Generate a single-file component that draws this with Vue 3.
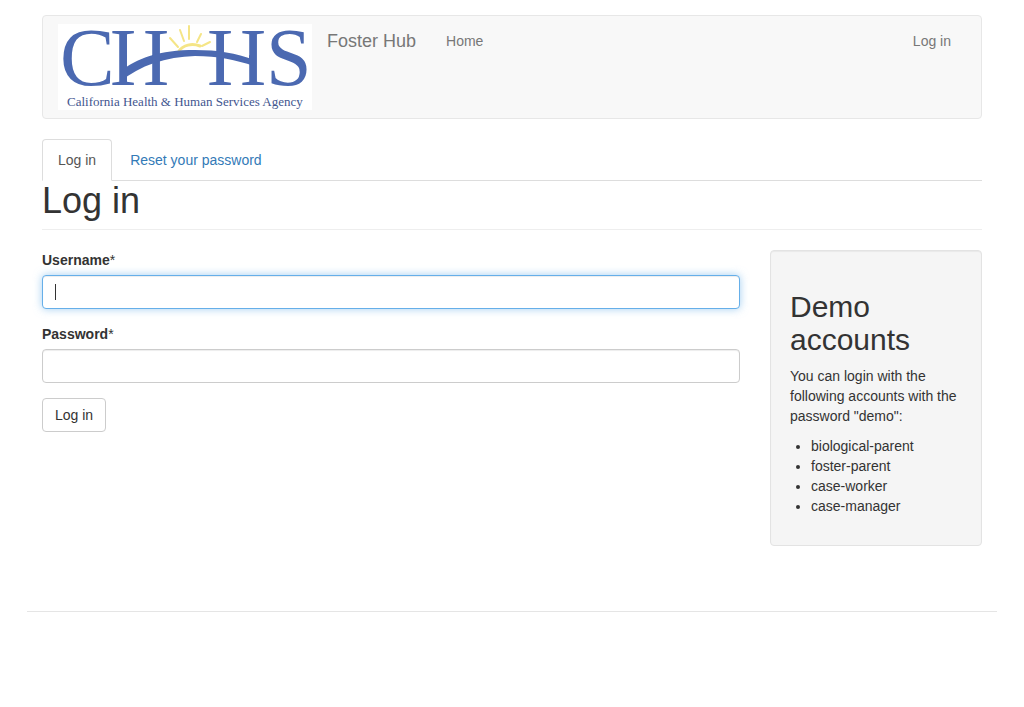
<script setup>
import { onMounted, ref } from 'vue'

const accounts = ['biological-parent', 'foster-parent', 'case-worker', 'case-manager']
const username = ref('')
const password = ref('')
const usernameField = ref(null)

onMounted(() => usernameField.value.focus())
</script>

<template>
  <div class="container">
    <header class="navbar">
      <a class="logo" href="#" aria-label="California Health &amp; Human Services Agency">
        <svg width="254" height="86" viewBox="0 0 254 86">
          <rect width="254" height="86" fill="#fff" />
          <g fill="none" stroke="#f5e586" stroke-width="2" stroke-linecap="round">
            <path d="M121 27C125 21 134 19 142 22" stroke-width="3" />
            <path d="M112 14l8 9M122 6l4 11M131 2v13M143 10l-4 8M152 18l-8 4" />
          </g>
          <g class="letters">
            <text x="2" y="61">C</text>
            <text x="52" y="61">H</text>
            <text x="149" y="61">H</text>
            <text x="208" y="61">S</text>
          </g>
          <path d="M69 28h25v12H69zM166 28h25v12h-25z" fill="#fff" />
          <path
            d="M62 48C78 34 102 26 137 26C160 26 178 29 196 36V42C178 36 160 32 137 32C108 33 82 41 62 58Z"
            fill="#4b69b1"
          />
          <text class="tagline" x="9" y="82">California Health &amp; Human Services Agency</text>
        </svg>
      </a>
      <a class="brand" href="#">Foster Hub</a>
      <nav class="menu">
        <a href="#">Home</a>
        <a href="#">Log in</a>
      </nav>
    </header>

    <nav class="tabs">
      <a class="active" href="#">Log in</a>
      <a href="#">Reset your password</a>
    </nav>
    <h1>Log in</h1>

    <div class="row">
      <form @submit.prevent>
        <div class="group">
          <label for="username">Username<span>*</span></label>
          <div class="field" :class="{ empty: !username }">
            <input id="username" ref="usernameField" v-model="username" type="text" class="focused" />
          </div>
        </div>
        <div class="group">
          <label for="password">Password<span>*</span></label>
          <input id="password" v-model="password" type="password" />
        </div>
        <button type="submit">Log in</button>
      </form>
      <aside>
        <h2>Demo accounts</h2>
        <p>You can login with the following accounts with the password "demo":</p>
        <ul>
          <li v-for="account in accounts" :key="account">{{ account }}</li>
        </ul>
      </aside>
    </div>
  </div>
  <footer></footer>
</template>

<style>
body {
  margin: 0;
  background: #fff;
}
</style>

<style scoped>
* {
  box-sizing: border-box;
}
.container,
footer {
  max-width: 970px;
  margin: 0 auto;
}
.container {
  padding: 15px 15px 0;
  font: 14px/20px "Liberation Sans", Arial, sans-serif;
  color: #333;
}
a {
  color: #337ab7;
  text-decoration: none;
}
.navbar {
  display: flex;
  align-items: flex-start;
  margin-bottom: 20px;
  padding: 0 15px;
  background: #f8f8f8;
  border: 1px solid #e7e7e7;
  border-radius: 4px;
}
.logo {
  margin: 8px 15px 8px 0;
}
.logo svg {
  display: block;
  overflow: visible;
}
.letters {
  font: 82px "Liberation Serif", serif;
  fill: #4b69b1;
}
.tagline {
  font: 13px "Liberation Serif", serif;
  fill: #43568f;
}
.navbar .brand {
  padding: 15px 15px 15px 0;
  font-size: 18px;
  color: #777;
}
.menu {
  display: flex;
  flex: 1;
  justify-content: space-between;
}
.menu a {
  padding: 15px;
  color: #777;
}
.tabs {
  display: flex;
  gap: 2px;
  border-bottom: 1px solid #ddd;
}
.tabs a {
  margin-bottom: -1px;
  padding: 10px 15px;
  border: 1px solid transparent;
  border-radius: 4px 4px 0 0;
}
.tabs .active {
  color: #555;
  background: #fff;
  border-color: #ddd #ddd #fff;
}
h1 {
  margin: 0 0 20px;
  padding-bottom: 8px;
  border-bottom: 1px solid #eee;
  font-size: 36px;
  font-weight: normal;
  line-height: 40px;
}
.row {
  display: grid;
  grid-template-columns: minmax(0, 1fr) 212px;
  gap: 30px;
  align-items: start;
}
.group {
  margin-bottom: 15px;
}
label {
  display: block;
  margin-bottom: 5px;
  font-weight: bold;
}
label span {
  font-weight: normal;
}
.field {
  position: relative;
}
.field.empty::after {
  content: "";
  position: absolute;
  top: 9px;
  left: 13px;
  width: 1px;
  height: 16px;
  background: #333;
}
.field.empty input {
  caret-color: transparent;
}
input {
  display: block;
  width: 100%;
  height: 34px;
  padding: 6px 12px;
  font: inherit;
  color: #555;
  background: #fff;
  border: 1px solid #ccc;
  border-radius: 4px;
  outline: 0;
  box-shadow: inset 0 1px 1px rgba(0, 0, 0, 0.075);
}
.focused {
  border-color: #66afe9;
  box-shadow: inset 0 1px 1px rgba(0, 0, 0, 0.075), 0 0 8px rgba(102, 175, 233, 0.6);
}
button {
  padding: 6px 12px;
  font: inherit;
  color: #333;
  background: #fff;
  border: 1px solid #ccc;
  border-radius: 4px;
}
aside {
  margin-bottom: 20px;
  padding: 19px;
  background: #f5f5f5;
  border: 1px solid #e3e3e3;
  border-radius: 4px;
  box-shadow: inset 0 1px 1px rgba(0, 0, 0, 0.05);
}
h2 {
  margin: 20px 0 10px;
  font-size: 30px;
  font-weight: normal;
  line-height: 33px;
}
p {
  margin: 0 0 10px;
}
ul {
  margin: 0 0 10px;
  padding-left: 21px;
}
footer {
  margin-top: 45px;
  padding-top: 35px;
  border-top: 1px solid #e5e5e5;
}
</style>
